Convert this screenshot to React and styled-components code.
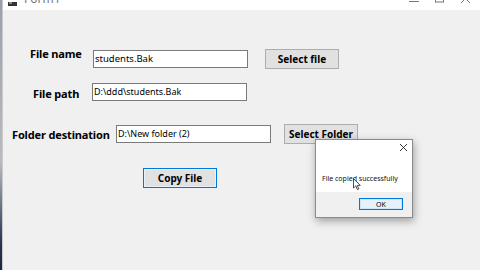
import React from "react";
import styled, { createGlobalStyle } from "styled-components";

const Global = createGlobalStyle`
  html, body {
    margin: 0;
    padding: 0;
    width: 480px;
    height: 270px;
    overflow: hidden;
    background: linear-gradient(#9aa0a8 0, #b8bcc2 60%, #2a3450 90%, #1c2440 100%);
  }
  #root { height: 270px; }
`;

const Window = styled.div`
  position: relative;
  margin-left: 2px;
  width: 478px;
  height: 270px;
  border-left: 1px solid #c9c9c9;
  background: #f0f0f0;
  font-family: "Noto Sans", "Open Sans", sans-serif;
  color: #000;
  display: flex;
  flex-direction: column;
`;

const TitleBar = styled.div`
  height: 10px;
  flex: none;
  background: #fff;
  display: flex;
  align-items: flex-end;
  overflow: hidden;
  padding-left: 5px;
  padding-right: 10px;
`;

const TitleText = styled.span`
  font-size: 12px;
  line-height: 16px;
  color: #777;
  margin-left: 6px;
  margin-bottom: 3px;
`;

const Controls = styled.div`
  margin-left: auto;
  display: flex;
  gap: 16px;
  align-items: flex-end;
  height: 10px;
`;

const Body = styled.div`
  display: flex;
  flex-direction: column;
  padding-top: 39px;
`;

const Row = styled.div`
  display: flex;
  align-items: center;
  height: 20px;
  padding-left: ${(p) => p.$indent}px;
  margin-top: ${(p) => p.$top || 0}px;
`;

const Label = styled.div`
  width: ${(p) => p.$w}px;
  flex: none;
  font-weight: 700;
  font-size: 11px;
  letter-spacing: -0.15px;
  white-space: nowrap;
  transform: translateY(${(p) => p.$shift || 0}px);
`;

const TextBox = styled.div`
  width: 155px;
  height: 18px;
  box-sizing: border-box;
  background: #fff;
  border: 1px solid #7a7a7a;
  font-size: ${(p) => p.$size || 9}px;
  line-height: 16px;
  padding-left: 1px;
  white-space: nowrap;
  overflow: hidden;
  flex: none;
`;

const Button = styled.div`
  width: 74px;
  height: 20px;
  box-sizing: border-box;
  flex: none;
  margin-left: ${(p) => p.$gap || 0}px;
  background: #e1e1e1;
  border: 1px solid ${(p) => (p.$focus ? "#0078d7" : "#adadad")};
  box-shadow: ${(p) => (p.$focus ? "inset 0 0 0 1px #e5f1fb" : "none")};
  display: flex;
  align-items: center;
  justify-content: center;
  font-weight: 700;
  font-size: 10px;
  white-space: nowrap;
`;

const Dialog = styled.div`
  position: absolute;
  left: 312px;
  top: 139px;
  width: 98px;
  height: 79px;
  box-sizing: border-box;
  border: 1px solid #8a8a8a;
  background: #fff;
  box-shadow: 1px 3px 8px rgba(0, 0, 0, 0.35);
  display: flex;
  flex-direction: column;
`;

const DialogTop = styled.div`
  flex: 1;
  display: flex;
  flex-direction: column;
  padding: 3px 4px 0 6px;
`;

const CloseRow = styled.div`
  display: flex;
  justify-content: flex-end;
  height: 12px;
`;

const Message = styled.div`
  margin-top: 19px;
  font-size: 7px;
  color: #111;
  white-space: nowrap;
`;

const DialogFoot = styled.div`
  height: 25px;
  background: #f0f0f0;
  display: flex;
  justify-content: flex-end;
  align-items: flex-start;
  padding: 6px 9px 0 0;
  box-sizing: border-box;
`;

const OkButton = styled.div`
  width: 44px;
  height: 12px;
  box-sizing: border-box;
  border: 1px solid #0078d7;
  background: #e5f1fb;
  box-shadow: inset 0 0 0 1px #cce4f7;
  font-size: 7px;
  display: flex;
  align-items: center;
  justify-content: center;
`;

const Cursor = styled.svg`
  position: absolute;
  left: 350px;
  top: 178px;
`;

function AppIcon() {
  return (
    <svg width="10" height="8" viewBox="0 0 10 8">
      <rect x="0" y="0" width="9" height="4" fill="#333" />
      <rect x="1" y="0" width="3" height="2" fill="#888" />
    </svg>
  );
}

function WinControls() {
  return (
    <Controls>
      <svg width="10" height="10" viewBox="0 0 10 10">
        <line x1="0" y1="1.5" x2="10" y2="1.5" stroke="#777" strokeWidth="1" />
      </svg>
      <svg width="10" height="10" viewBox="0 0 10 10">
        <rect x="0.5" y="-6" width="8" height="8" fill="none" stroke="#777" strokeWidth="1" />
      </svg>
      <svg width="10" height="10" viewBox="0 0 10 10">
        <path d="M0 -6 L9 3 M9 -6 L0 3" stroke="#777" strokeWidth="1" />
      </svg>
    </Controls>
  );
}

export default function App() {
  return (
    <>
      <Global />
      <Window>
        <TitleBar>
          <AppIcon />
          <TitleText>Form1</TitleText>
          <WinControls />
        </TitleBar>
        <Body>
          <Row $indent={27}>
            <Label $w={63} $shift={-6}>File name</Label>
            <TextBox $size={9.5}>students.Bak</TextBox>
            <Button $gap={17}>Select file</Button>
          </Row>
          <Row $indent={30} $top={13}>
            <Label $w={59} $shift={1}>File path</Label>
            <TextBox>D:\ddd\students.Bak</TextBox>
          </Row>
          <Row $indent={9} $top={22}>
            <Label $w={104}>Folder destination</Label>
            <TextBox>D:\New folder (2)</TextBox>
            <Button $gap={13}>Select Folder</Button>
          </Row>
          <Row $indent={140} $top={24}>
            <Button $focus>Copy File</Button>
          </Row>
        </Body>
        <Dialog>
          <DialogTop>
            <CloseRow>
              <svg width="9" height="9" viewBox="0 0 9 9">
                <path d="M1 1 L8 8 M8 1 L1 8" stroke="#222" strokeWidth="0.9" />
              </svg>
            </CloseRow>
            <Message>File copied successfully</Message>
          </DialogTop>
          <DialogFoot>
            <OkButton>OK</OkButton>
          </DialogFoot>
        </Dialog>
        <Cursor width="8" height="13" viewBox="0 0 8 13">
          <path d="M0.5 0.5 L0.5 10 L2.8 7.8 L4.4 11.6 L5.8 11 L4.3 7.4 L7.3 7.4 Z" fill="#fff" stroke="#222" strokeWidth="0.8" />
        </Cursor>
      </Window>
    </>
  );
}
